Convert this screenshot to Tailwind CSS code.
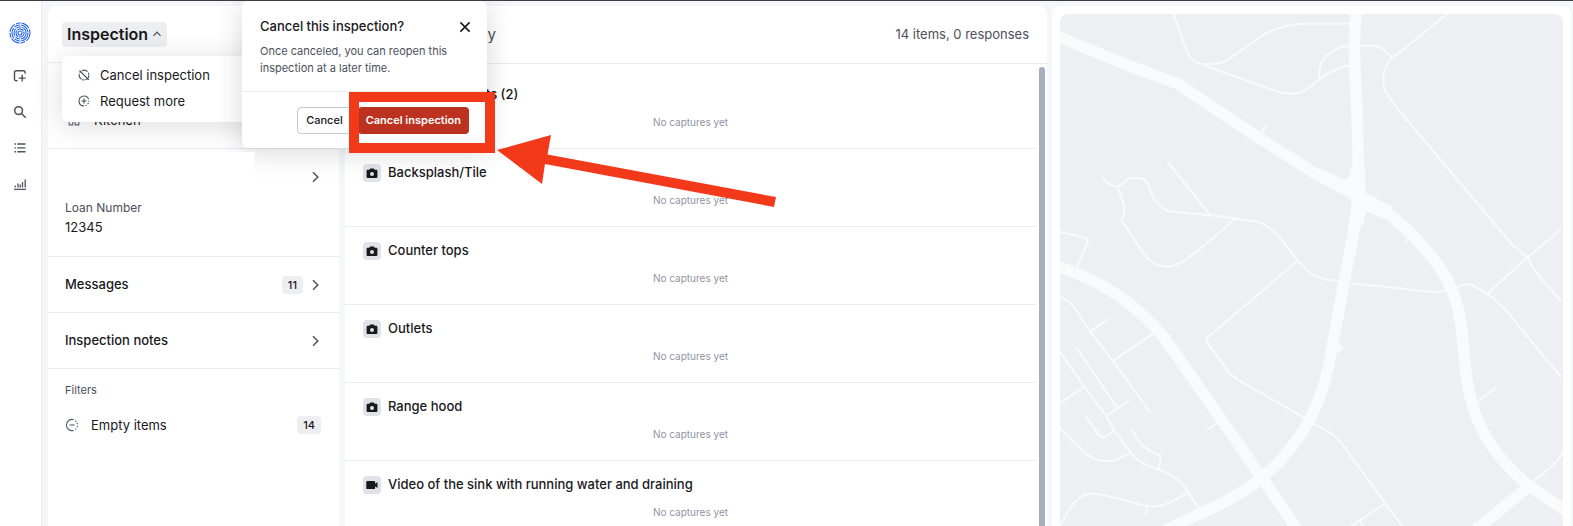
<!DOCTYPE html>
<html lang="en">
<head>
    <meta charset="utf-8">
    <title>Inspection</title>
    <script src="https://cdn.jsdelivr.net/npm/@tailwindcss/browser@4"></script>
</head>
<body class="relative flex h-screen overflow-hidden border-t border-[#3f3b42] bg-[#f5f6f9] font-['Inter',sans-serif] text-[13px] leading-5 text-[#18191b]">

    <!-- Icon rail -->
    <nav class="flex w-[42px] shrink-0 flex-col items-center border-r border-[#ebecf1] bg-white pt-5 pr-0.5 text-[#4c505b]">
        <a href="#" aria-label="Home" class="mb-6">
            <svg class="size-6" viewBox="0 0 24 24" fill="none" stroke="#2563f0" stroke-width="1.1">
                <circle cx="12" cy="12" r="10" stroke-dasharray="9 1.2 5 1"/>
                <circle cx="12" cy="12" r="8" stroke-dasharray="11 1.2 6 1"/>
                <circle cx="12" cy="12" r="6" stroke-dasharray="8 1 5 1"/>
                <circle cx="12" cy="12" r="4" stroke-dasharray="7 .8"/>
                <circle cx="12" cy="12" r="2"/>
            </svg>
        </a>
        <div class="flex flex-col items-center gap-[22px]">
            <a href="#" aria-label="New inspection">
                <svg class="size-3.5" viewBox="0 0 14 14" fill="none" stroke="currentColor" stroke-width="1.4">
                    <path d="M4.5 11.8H3.2a1.7 1.7 0 0 1-1.7-1.7V3.4a1.7 1.7 0 0 1 1.7-1.7h7.2a1.7 1.7 0 0 1 1.7 1.7v1.4M9.2 5.7v6.8M5.8 9.1h6.8"/>
                </svg>
            </a>
            <a href="#" aria-label="Search">
                <svg class="size-3.5" viewBox="0 0 14 14" fill="none" stroke="currentColor" stroke-width="1.5">
                    <circle cx="5.6" cy="5.6" r="3.9"/>
                    <path d="m8.5 8.5 4.2 4.2"/>
                </svg>
            </a>
            <a href="#" aria-label="List">
                <svg class="size-3.5" viewBox="0 0 14 14" fill="none" stroke="currentColor" stroke-width="1.4">
                    <path d="M1.5 3h1.5M1.5 6.9h1.5M1.5 10.8h1.5M4.3 3h8.2M4.3 6.9h8.2M4.3 10.8h8.2"/>
                </svg>
            </a>
            <a href="#" aria-label="Reports">
                <svg class="size-3.5" viewBox="0 0 14 14" fill="none" stroke="currentColor" stroke-width="1.3">
                    <path d="M1 12.3h12M2.2 8.5v2M5 6.5v4M7.2 7.5v3M9.5 5v5.5M12.2 2.5v8"/>
                </svg>
            </a>
        </div>
    </nav>

    <main class="flex min-w-0 flex-1 gap-[6px] pt-[5px] pr-0.5 pl-[6px]">

        <!-- Inspection sidebar -->
        <section class="relative w-[291px] shrink-0 rounded-tl-lg bg-white">
            <header class="flex h-[57px] items-center border-b border-[#ebecf1] pl-3.5">
                <button class="flex h-[25px] items-center gap-1 rounded bg-[#edeef2] px-[5px] text-base font-semibold">
                    Inspection
                    <svg class="size-2.5" viewBox="0 0 10 10" fill="none" stroke="#4c505b" stroke-width="1.2"><path d="m1.5 6.8 3.5-3.6 3.5 3.6"/></svg>
                </button>
            </header>

            <div class="flex h-[86px] items-end gap-3.5 border-b border-[#ebecf1] px-5 pb-[18px]">
                <svg class="mb-1 size-3" viewBox="0 0 12 12" fill="none" stroke="#6b7080" stroke-width="1.2"><path d="M1.2 1.2h3.6v3.6H1.2zM7.2 1.2h3.6v3.6H7.2zM1.2 7.2h3.6v3.6H1.2zM7.2 7.2h3.6v3.6H7.2z"/></svg>
                <span>Kitchen</span>
            </div>

            <div class="border-b border-[#ebecf1] pt-[3px] pb-[19px]">
                <div class="flex items-center">
                    <div class="relative z-30 h-[50px] w-[206px] bg-white"></div>
                    <svg class="mr-[18px] ml-auto size-3" viewBox="0 0 12 12" fill="none" stroke="#555966" stroke-width="1.6"><path d="m4 1.2 4.8 4.8L4 10.8"/></svg>
                </div>
                <dl class="px-[17px]">
                    <dt class="mb-[3px] text-xs leading-3 text-[#4c505b]">Loan Number</dt>
                    <dd>12345</dd>
                </dl>
            </div>

            <button class="flex h-14 w-full items-center border-b border-[#ebecf1] pr-[18px] pl-[17px] text-left font-medium">
                <span class="pb-0.5">Messages</span>
                <span class="ml-auto rounded bg-[#edeef2] px-[6px] text-[11px] leading-[18px]">11</span>
                <svg class="ml-1.5 size-3" viewBox="0 0 12 12" fill="none" stroke="#555966" stroke-width="1.6"><path d="m4 1.2 4.8 4.8L4 10.8"/></svg>
            </button>
            <button class="flex h-14 w-full items-center border-b border-[#ebecf1] pr-[18px] pl-[17px] text-left font-medium">
                <span class="pb-0.5">Inspection notes</span>
                <svg class="ml-auto size-3" viewBox="0 0 12 12" fill="none" stroke="#555966" stroke-width="1.6"><path d="m4 1.2 4.8 4.8L4 10.8"/></svg>
            </button>

            <div class="pt-[11px] pr-[18px] pl-[17px]">
                <h3 class="text-[11px] leading-5 text-[#4c505b]">Filters</h3>
                <button class="mt-[15px] flex w-full items-center text-left">
                    <svg class="mr-3 size-3.5" viewBox="0 0 14 14" fill="none" stroke="#555966" stroke-width="1.1">
                        <path d="M8.5 1.6A5.6 5.6 0 1 0 8.5 12.4"/>
                        <path d="M10.3 2.6A5.6 5.6 0 0 1 10.3 11.4" stroke-dasharray="1.4 1.4"/>
                        <path d="M4.5 7h5"/>
                    </svg>
                    Empty items
                    <span class="ml-auto rounded bg-[#edeef2] px-[6px] text-[11px] leading-[18px] font-medium">14</span>
                </button>
            </div>

            <!-- Inspection menu -->
            <div class="absolute top-[50px] left-3.5 z-10 flex w-52 flex-col rounded-md bg-white px-4 pt-1.5 pb-2 shadow-[0_4px_30px_rgba(0,0,0,0.14)]">
                <button class="flex h-[26px] items-center gap-2.5 text-left">
                    <svg class="size-3" viewBox="0 0 12 12" fill="none" stroke="#4c505b" stroke-width="1.1">
                        <circle cx="6" cy="6" r="4.9" stroke-dasharray="6 1.2 2 1"/>
                        <path d="m1.5 1.5 9.3 9.3"/>
                    </svg>
                    Cancel inspection
                </button>
                <button class="flex h-[26px] items-center gap-2.5 text-left">
                    <svg class="size-3" viewBox="0 0 12 12" fill="none" stroke="#4c505b" stroke-width="1.1">
                        <path d="M10.6 4.4A4.9 4.9 0 1 0 6 10.9"/>
                        <path d="M7.4 10.7A4.9 4.9 0 0 0 10.9 5.8" stroke-dasharray="1.4 1.3"/>
                        <path d="M6 3.4v5.2M3.4 6h5.2"/>
                    </svg>
                    Request more
                </button>
            </div>
        </section>

        <!-- Items -->
        <section class="flex min-w-0 flex-1 flex-col rounded-tr-lg bg-white">
            <header class="flex h-[58px] shrink-0 items-center justify-between border-b border-[#ebecf1] pr-[18px] text-[#4c505b]">
                <span class="w-[151px] text-right text-[15px]">Activity</span>
                <span class="pb-0.5">14 items, 0 responses</span>
            </header>
            <div class="flex min-h-0 flex-1">
                <ul id="items" class="min-w-0 flex-1 overflow-hidden pt-[7px]"></ul>
                <div class="mt-[3px] mr-0.5 ml-[3px] w-1.5 rounded-t-full bg-[#a7aebd]"></div>
            </div>
        </section>

        <!-- Map -->
        <section class="-ml-px w-[519px] shrink-0 rounded-t-lg bg-white px-2 pt-2">
            <svg class="h-full w-full rounded-t-lg bg-[#eeeff3]" viewBox="56 42 1483 1536" preserveAspectRatio="none" fill="none" stroke="#f9fafc" stroke-linecap="round" stroke-linejoin="round" role="img" aria-label="Map">
                <!-- main roads -->
                <g stroke-width="34">
                    <path d="M40 106 256 196 405 252 480 304 650 418 815 525 935 588C1030 630 1120 720 1180 810 1225 880 1238 945 1245 1040 1255 1200 1285 1330 1440 1458L1560 1542"/>
                    <path d="M931 30C920 100 925 200 930 300 934 400 937 520 934 600 925 700 905 780 893 850L858 1042C840 1170 790 1320 650 1433 560 1510 440 1550 350 1600"/>
                    <path d="M40 796C170 840 270 900 360 1008L649 1430 770 1610"/>
                    <path d="M1440 1458 1270 1600"/>
                </g>
                <path fill="#f9fafc" stroke="none" d="M815 505 840 512 888 537C905 540 912 530 913 500L955 500 956 578 1035 620 1030 662 1012 657 966 635C955 632 955 660 948 678L925 690 913 598ZM875 1026 892 1043 875 1060Z"/>
                <!-- streets -->
                <g stroke-width="6">
                    <path d="M390 42 430 155Q442 186 475 192 520 194 545 183L645 112Q700 75 770 71H912"/>
                    <path d="M475 192 515 209 690 272Q732 290 775 274L822 237Q880 196 912 197M822 237C816 190 835 170 860 153 885 135 900 139 915 139M938 137H985C1005 140 1020 155 1036 175"/>
                    <path d="M1196 42 1036 175C1005 205 1003 250 1019 278 1030 300 1040 312 1060 337L1390 735 1435 772 1532 689M1435 772 1317 880M1435 772Q1445 800 1470 830L1530 901M663 380 650 397M1075 725 1092 710"/>
                    <path d="M181 534Q200 555 226 562L261 533 290 535C320 538 317 565 332 594 350 622 365 633 395 636L500 646 570 655 640 666C670 675 690 697 705 713L757 782 800 824Q825 840 880 843M915 850 1080 868C1150 875 1170 880 1190 871M1225 862Q1250 847 1275 857C1310 878 1340 895 1370 930L1495 1085 1532 1128"/>
                    <path d="M375 488 500 646M570 655C530 700 480 735 435 773 400 803 340 820 298 755L238 660C250 625 250 625 226 562"/>
                    <path d="M757 782 490 1013Q486 1020 490 1028L550 1113Q560 1125 585 1142L780 1255 850 1297Q870 1308 890 1335L1015 1510 1070 1585M1015 1510 915 1578M940 1563 950 1578"/>
                    <path d="M56 695 125 712Q142 717 137 728L105 802M56 892C95 902 110 945 145 995L212 1083 321 1236M145 995 197 958M212 1083 330 1000"/>
                    <path d="M56 1055 127 1160 193 1248 215 1290 265 1358C290 1390 310 1396 348 1409 395 1428 410 1440 435 1478L465 1525M56 1210 127 1160M104 1043 225 1223M193 1248 258 1204M132 1250 170 1303Q180 1317 192 1309L215 1292"/>
                    <path d="M56 1285 125 1353C160 1388 190 1386 220 1380L265 1358M270 1288Q288 1345 353 1367L348 1409M56 1578 85 1525C120 1475 145 1478 185 1485L290 1513Q340 1528 380 1507L435 1478M313 1520 311 1543M490 1289 515 1272"/>
                    <path d="M1290 1203 1343 1160M1450 1445 1510 1395Q1532 1373 1545 1345"/>
                </g>
            </svg>
        </section>
    </main>

    <!-- Cancel dialog -->
    <div role="dialog" aria-labelledby="dialogTitle" class="absolute top-0 left-[242px] z-20 w-[245px] rounded-md bg-white shadow-[0_4px_28px_rgba(0,0,0,0.16)]">
        <div class="relative border-b border-[#ebecf1] px-[18px] pt-[15px] pb-3.5">
            <h2 id="dialogTitle" class="mb-[7px] font-medium">Cancel this inspection?</h2>
            <p class="text-[11px] leading-[17px] text-[#4c505b]">Once canceled, you can reopen this inspection at a later time.</p>
            <button aria-label="Close" class="absolute top-5 right-4">
                <svg class="size-3" viewBox="0 0 12 12" fill="none" stroke="currentColor" stroke-width="1.6"><path d="m1.4 1.4 9.2 9.2M10.6 1.4l-9.2 9.2"/></svg>
            </button>
        </div>
        <div class="flex justify-end gap-1.5 px-[18px] pt-[15px] pb-3.5 text-[11px]">
            <button class="h-[27px] rounded border border-[#c5c7d3] px-2 pb-0.5 font-medium">Cancel</button>
            <button class="h-[27px] rounded bg-[#bd3120] px-2 pb-0.5 font-semibold text-white">Cancel inspection</button>
        </div>
    </div>

    <!-- Callout -->
    <div class="pointer-events-none absolute top-[91px] left-[349px] z-40 h-[61px] w-[146px] border-10 border-[#f2391a]"></div>
    <svg class="pointer-events-none absolute top-[129px] left-[493px] z-40 h-[84px] w-[290px]" viewBox="0 0 290 84" fill="#f2391a">
        <path d="M4 20 58 5 54.500 24.500 283 67 281 77 52 34 49 54Z"/>
    </svg>

    <script>
        const camera = `<path fill-rule="evenodd" d="M4.200 1.500h3.600l.9 1.300h1.800c.5 0 .9.400.9.900v6.400c0 .5-.4.900-.9.900h-9a.9.9 0 0 1-.9-.9V3.700c0-.5.400-.9.900-.9h1.800zM6 4.900a2 2 0 1 0 0 4 2 2 0 0 0 0-4z"/>`;
        const video = `<path d="M1.200 2h7c.5 0 .9.400.9.900v1.800L11.500 3v6L9.100 7.300v1.900c0 .5-.4.900-.9.900h-7a.9.9 0 0 1-.9-.9V2.900c0-.5.400-.9.900-.9z"/>`;
        const items = [
            { title: 'Pantry & cabinets (2)', icon: camera },
            { title: 'Backsplash/Tile', icon: camera },
            { title: 'Counter tops', icon: camera },
            { title: 'Outlets', icon: camera },
            { title: 'Range hood', icon: camera },
            { title: 'Video of the sink with running water and draining', icon: video },
        ];

        document.getElementById('items').innerHTML = items.map(item => `
            <li class="h-[78px] border-b border-[#ebecf1] px-[18px] pt-[13px]">
                <div class="flex gap-[7px]">
                    <span class="mt-0.5 flex size-[18px] items-center justify-center rounded bg-[#e0e2ea]">
                        <svg class="size-3" viewBox="0 0 12 12" fill="#18191b">${item.icon}</svg>
                    </span>
                    <h3 class="font-medium">${item.title}</h3>
                </div>
                <p class="mt-2 text-center text-[10px] leading-5 text-[#8f94a3]">No captures yet</p>
            </li>
        `).join('');
    </script>
</body>
</html>
